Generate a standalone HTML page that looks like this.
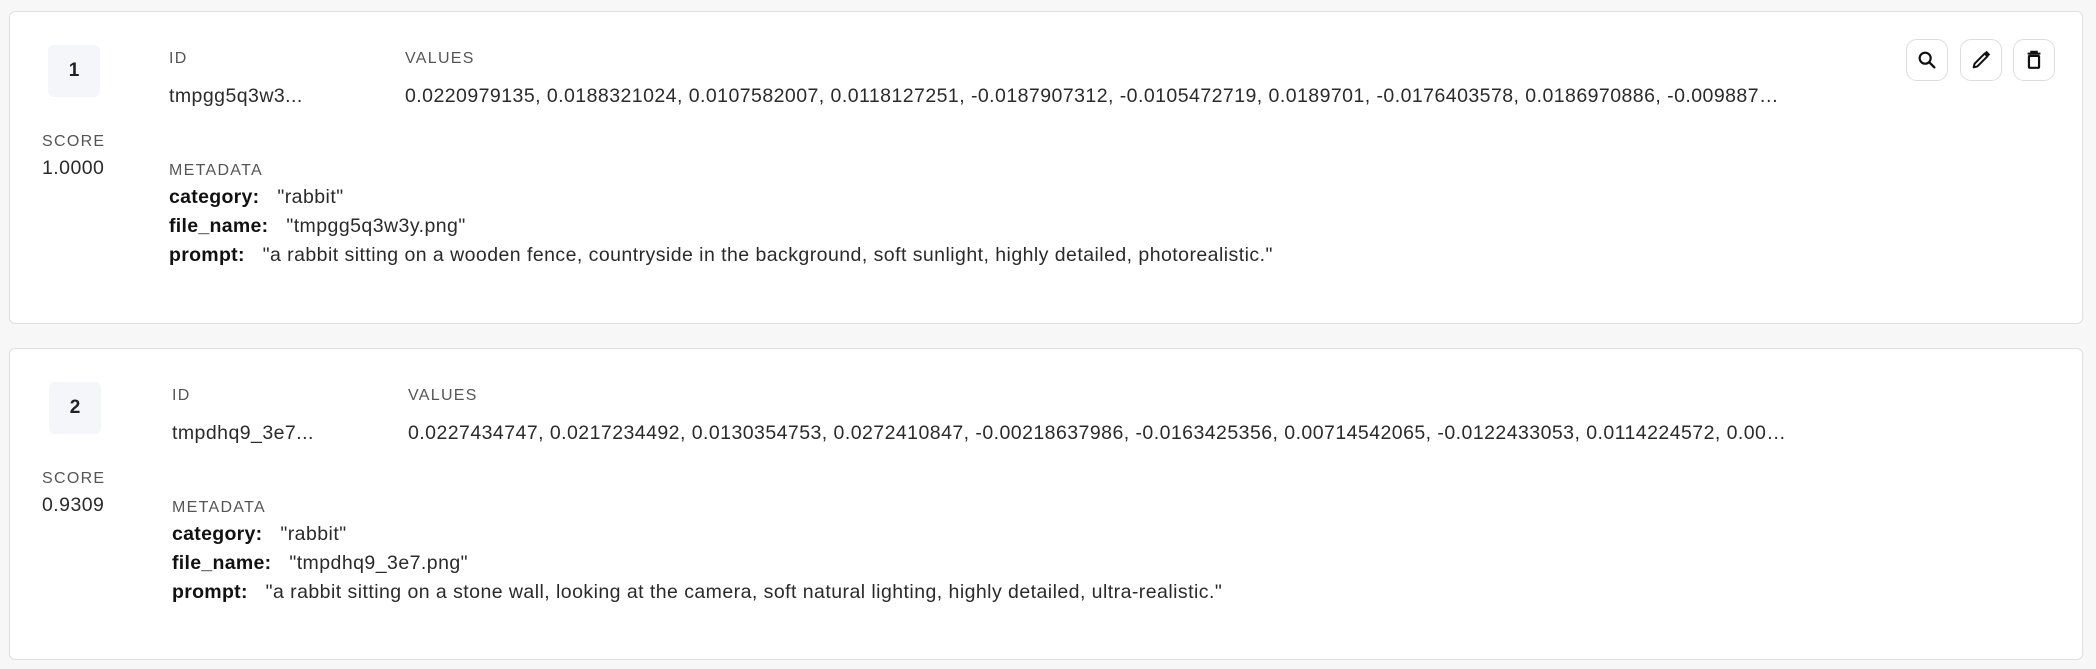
<!DOCTYPE html>
<html><head><meta charset="utf-8"><style>
*{box-sizing:border-box;margin:0;padding:0}
body{width:2096px;height:669px;background:#f7f7f8;font-family:"Liberation Sans",sans-serif;color:#222;position:relative;overflow:hidden}
.card{position:absolute;left:9px;width:2074px;background:#fff;border:1px solid #dfe0e3;border-radius:6px}
.abs{position:absolute;white-space:nowrap}
.num{width:52px;height:52px;background:#f5f6fa;border-radius:6px;display:flex;align-items:center;justify-content:center;font-size:19px;font-weight:bold;color:#222}
.lbl{font-size:16px;letter-spacing:1.3px;color:#555;line-height:20px}
.val{font-size:19.5px;letter-spacing:0.45px;line-height:24px;color:#2a2a2a}
.meta{font-size:19.5px;letter-spacing:0.45px;line-height:29px;color:#2a2a2a}
.meta b{color:#111;margin-right:12px;letter-spacing:0.3px}
.btn{position:absolute;width:42px;height:42px;border:1px solid #dcdde0;border-radius:11px;display:flex;align-items:center;justify-content:center;background:#fff}
.ell{overflow:hidden;text-overflow:ellipsis}
</style></head><body>

<div class="card" style="top:11px;height:313px">
  <div class="abs num" style="left:38px;top:33px">1</div>
  <div class="abs lbl" style="left:159px;top:37px">ID</div>
  <div class="abs lbl" style="left:395px;top:37px">VALUES</div>
  <div class="abs val" style="left:159px;top:72px">tmpgg5q3w3...</div>
  <div class="abs val ell" style="left:395px;top:72px;width:1381px">0.0220979135, 0.0188321024, 0.0107582007, 0.0118127251, -0.0187907312, -0.0105472719, 0.0189701, -0.0176403578, 0.0186970886, -0.0098873646, 0.0123456789, 0.0112233445</div>
  <div class="abs lbl" style="left:32px;top:120px">SCORE</div>
  <div class="abs val" style="left:32px;top:144px">1.0000</div>
  <div class="abs lbl" style="left:159px;top:149px">METADATA</div>
  <div class="abs meta" style="left:159px;top:171px"><b>category:</b> "rabbit"<br><b>file_name:</b> "tmpgg5q3w3y.png"<br><b>prompt:</b> "a rabbit sitting on a wooden fence, countryside in the background, soft sunlight, highly detailed, photorealistic."</div>
  <div class="btn" style="left:1896px;top:27px"><svg width="22" height="22" viewBox="0 0 24 24"><circle cx="10" cy="10" r="6" fill="none" stroke="#111" stroke-width="2.4"/><path d="M14.5 14.5L20 20" stroke="#111" stroke-width="2.6" stroke-linecap="round"/></svg></div>
  <div class="btn" style="left:1950px;top:27px"><svg width="22" height="22" viewBox="0 0 24 24"><path d="M4 20l1-4L16 5l3 3L8 19z" fill="none" stroke="#111" stroke-width="2.2" stroke-linejoin="round"/><path d="M17 3l4 4" stroke="#111" stroke-width="3"/></svg></div>
  <div class="btn" style="left:2003px;top:27px"><svg width="22" height="22" viewBox="0 0 24 24"><path d="M5 5h14M9 5V3h6v2" stroke="#111" stroke-width="2.2" fill="none"/><rect x="6.5" y="7.5" width="11" height="13" rx="1" fill="none" stroke="#111" stroke-width="2.4"/></svg></div>
</div>

<div class="card" style="top:348px;height:312px">
  <div class="abs num" style="left:39px;top:33px">2</div>
  <div class="abs lbl" style="left:162px;top:37px">ID</div>
  <div class="abs lbl" style="left:398px;top:37px">VALUES</div>
  <div class="abs val" style="left:162px;top:72px">tmpdhq9_3e7...</div>
  <div class="abs val ell" style="left:398px;top:72px;width:1378px">0.0227434747, 0.0217234492, 0.0130354753, 0.0272410847, -0.00218637986, -0.0163425356, 0.00714542065, -0.0122433053, 0.0114224572, 0.00123456789, 0.0112233445</div>
  <div class="abs lbl" style="left:32px;top:120px">SCORE</div>
  <div class="abs val" style="left:32px;top:144px">0.9309</div>
  <div class="abs lbl" style="left:162px;top:149px">METADATA</div>
  <div class="abs meta" style="left:162px;top:171px"><b>category:</b> "rabbit"<br><b>file_name:</b> "tmpdhq9_3e7.png"<br><b>prompt:</b> "a rabbit sitting on a stone wall, looking at the camera, soft natural lighting, highly detailed, ultra-realistic."</div>
</div>

</body></html>
